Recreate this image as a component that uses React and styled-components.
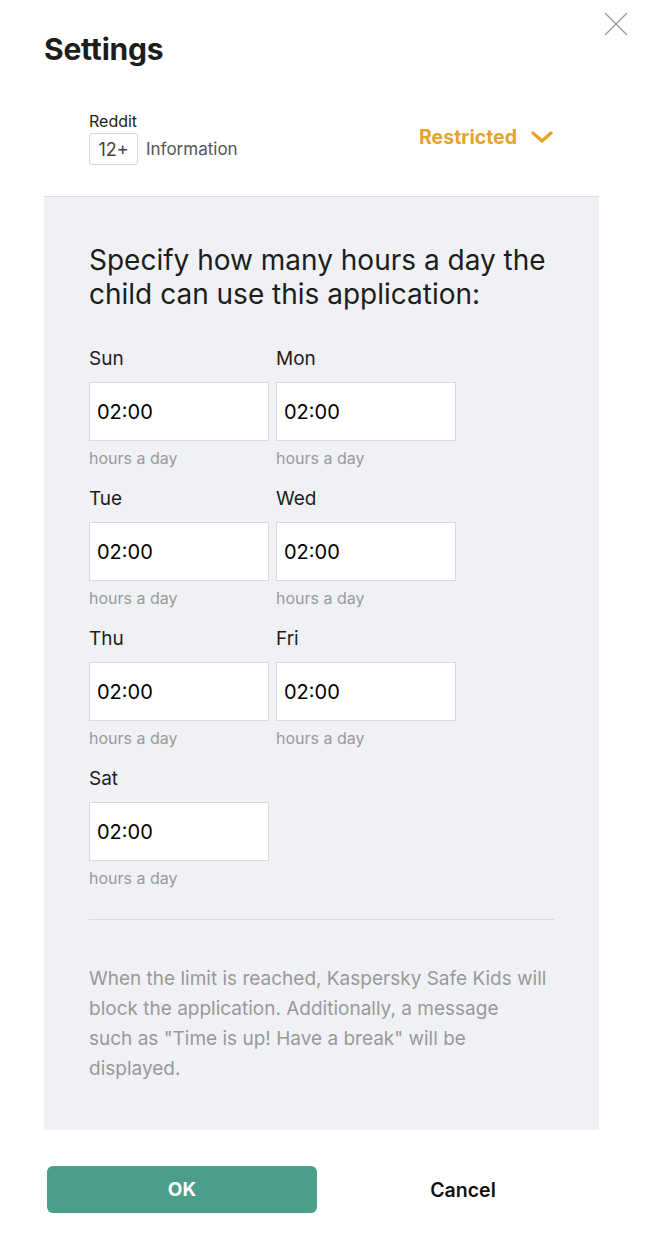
import React from "react";
import styled, { createGlobalStyle } from "styled-components";

const Global = createGlobalStyle`
  html, body { margin: 0; padding: 0; background: #fff; }
  body { font-family: Inter, "Noto Sans", Arial, sans-serif; color: #1d1d1b; }
  * { box-sizing: border-box; }
`;

const Dialog = styled.div`
  position: relative;
  width: 645px;
  padding: 0 46px 30px 44px;
`;

const Close = styled.button`
  position: absolute;
  top: 12px;
  right: 17px;
  width: 24px;
  height: 24px;
  padding: 0;
  border: none;
  background: none;
  cursor: pointer;
`;

const Title = styled.h1`
  margin: 0;
  padding-top: 31px;
  height: 80px;
  font-size: 30px;
  font-weight: 700;
  line-height: 36px;
  letter-spacing: -0.2px;
  color: #1d1d1b;
`;

const AppRow = styled.div`
  display: flex;
  align-items: center;
  justify-content: space-between;
  padding: 31px 45px 31px;
  border-bottom: 1px solid #dcdde0;
`;

const AppInfo = styled.div`
  display: flex;
  flex-direction: column;
  gap: 2px;
`;

const AppName = styled.div`
  font-size: 16px;
  line-height: 20px;
  color: #1d1d1b;
`;

const Meta = styled.div`
  display: flex;
  align-items: center;
  gap: 8px;
`;

const Badge = styled.span`
  display: inline-flex;
  align-items: center;
  justify-content: center;
  width: 49px;
  height: 32px;
  border: 1px solid #d6d6d6;
  border-radius: 3px;
  font-size: 18px;
  color: #444;
`;

const MetaText = styled.span`
  font-size: 17px;
  color: #555;
`;

const Status = styled.div`
  display: flex;
  align-items: center;
  gap: 13px;
  margin-bottom: 2px;
  font-size: 19.5px;
  font-weight: 700;
  color: #e8a22b;
`;

const Panel = styled.div`
  background: #f0f1f4;
  padding: 46px 45px 46px;
`;

const Heading = styled.h2`
  margin: 0 0 37px;
  font-size: 28px;
  font-weight: 400;
  line-height: 34px;
  color: #1d1d1b;
`;

const DayGrid = styled.div`
  display: grid;
  grid-template-columns: 180px 180px;
  column-gap: 7px;
  row-gap: 20px;
`;

const Day = styled.div`
  display: flex;
  flex-direction: column;
`;

const DayLabel = styled.label`
  font-size: 19px;
  line-height: 22px;
  margin-bottom: 12px;
  color: #1d1d1b;
`;

const TimeInput = styled.input`
  width: 180px;
  height: 59px;
  border: 1px solid #d9d9dc;
  background: #fff;
  padding: 0 7px;
  font-family: inherit;
  font-size: 20px;
  color: #000;
  outline: none;
`;

const Hint = styled.div`
  margin-top: 7px;
  font-size: 16px;
  line-height: 20px;
  color: #9a9a9a;
`;

const Rule = styled.hr`
  margin: 31px 0 44px;
  border: none;
  border-top: 1px solid #d9dadd;
`;

const Note = styled.p`
  margin: 0;
  font-size: 19px;
  line-height: 30px;
  color: #999;
`;

const Footer = styled.div`
  display: grid;
  grid-template-columns: 270px 1fr;
  align-items: center;
  padding: 36px 0 0 3px;
`;

const Primary = styled.button`
  height: 47px;
  border: none;
  border-radius: 6px;
  background: #4a9e8a;
  color: #fff;
  font-family: inherit;
  font-size: 19px;
  font-weight: 700;
  cursor: pointer;
`;

const Secondary = styled.button`
  height: 47px;
  border: none;
  background: none;
  padding: 0 0 0 10px;
  color: #111;
  font-family: inherit;
  font-size: 19.5px;
  font-weight: 600;
  cursor: pointer;
`;

const days = ["Sun", "Mon", "Tue", "Wed", "Thu", "Fri", "Sat"];

export default function App() {
  return (
    <>
      <Global />
      <Dialog>
        <Close aria-label="Close">
          <svg width="24" height="24" viewBox="0 0 24 24">
            <path d="M1 1 L23 23 M23 1 L1 23" stroke="#9b9b9b" strokeWidth="1.4" fill="none" />
          </svg>
        </Close>
        <Title>Settings</Title>
        <AppRow>
          <AppInfo>
            <AppName>Reddit</AppName>
            <Meta>
              <Badge>12+</Badge>
              <MetaText>Information</MetaText>
            </Meta>
          </AppInfo>
          <Status>
            Restricted
            <svg width="24" height="16" viewBox="0 0 24 16">
              <path d="M3 4 L12 12 L21 4" stroke="#e8a22b" strokeWidth="3.4" strokeLinecap="round" strokeLinejoin="round" fill="none" />
            </svg>
          </Status>
        </AppRow>
        <Panel>
          <Heading>Specify how many hours a day the child can use this application:</Heading>
          <DayGrid>
            {days.map((d) => (
              <Day key={d}>
                <DayLabel>{d}</DayLabel>
                <TimeInput defaultValue="02:00" />
                <Hint>hours a day</Hint>
              </Day>
            ))}
          </DayGrid>
          <Rule />
          <Note>
            When the limit is reached, Kaspersky Safe Kids will
            <br />
            block the application. Additionally, a message
            <br />
            such as "Time is up! Have a break" will be
            <br />
            displayed.
          </Note>
        </Panel>
        <Footer>
          <Primary>OK</Primary>
          <Secondary>Cancel</Secondary>
        </Footer>
      </Dialog>
    </>
  );
}
